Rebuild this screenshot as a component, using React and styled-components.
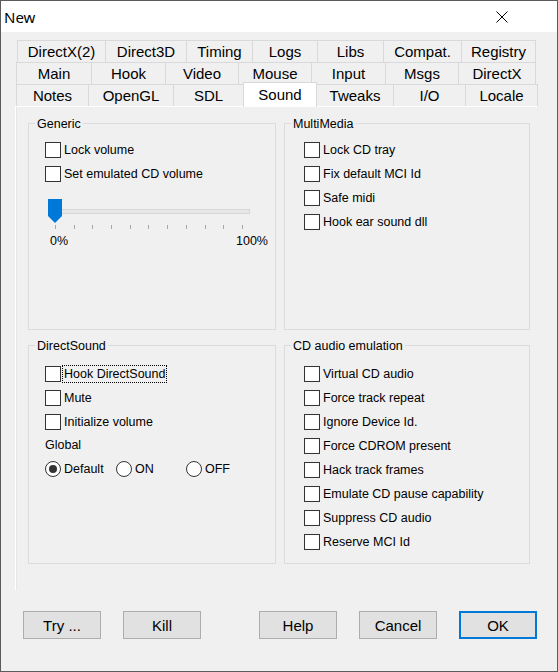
import React from 'react';
import styled, { createGlobalStyle, css } from 'styled-components';

const Global = createGlobalStyle`
  html, body { margin: 0; padding: 0; background: #ffffff; }
  body { font-family: "Liberation Sans", Arial, sans-serif; }
  * { box-sizing: border-box; }
`;

const Window = styled.div`
  width: 558px;
  height: 672px;
  border: 1px solid #5b5b5b;
  background: #f0f0f0;
  display: flex;
  flex-direction: column;
`;

const TitleBar = styled.div`
  height: 31px;
  flex: none;
  background: #ffffff;
  display: flex;
  align-items: center;
  justify-content: space-between;
  padding: 0 49px 0 3px;
  font-family: "Noto Sans", "Liberation Sans", sans-serif;
  font-size: 15px;
  color: #000;
`;

const Body = styled.div`
  flex: 1;
  display: flex;
  flex-direction: column;
  padding: 8px 0 0 14px;
`;

const TabRow = styled.div`
  display: flex;
  height: 22px;
  margin-left: ${p => p.$indent}px;
`;

const Tab = styled.div`
  flex: none;
  width: ${p => p.$w}px;
  height: 22px;
  border-top: 1px solid #d9d9d9;
  border-right: 1px solid #d9d9d9;
  &:first-child { border-left: 1px solid #d9d9d9; }
  display: flex;
  align-items: center;
  justify-content: center;
  font-size: 15px;
  color: #000;
  background: #f0f0f0;
  white-space: nowrap;
  ${p => p.$active && css`
    background: #ffffff;
    height: 25px;
    margin-top: -2px;
    margin-left: -1px;
    border-left: 1px solid #d9d9d9;
    padding-bottom: 2px;
    position: relative;
    z-index: 1;
  `}
`;

const Panel = styled.div`
  width: 522px;
  height: 484px;
  flex: none;
  border-top: 1px solid #ffffff;
  border-left: 1px solid #ffffff;
  box-shadow: inset 1px 0 0 #e6e6e6;
  padding: 8px 0 0 12px;
  display: grid;
  grid-template-columns: 248px 246px;
  grid-template-rows: 215px 227px;
  column-gap: 8px;
  row-gap: 7px;
`;

const Group = styled.fieldset`
  margin: 0;
  min-width: 0;
  border: 1px solid #dcdcdc;
  padding: ${p => p.$pt}px 0 0 ${p => p.$pl}px;
  display: flex;
  flex-direction: column;
`;

const Legend = styled.legend`
  font-size: 12.5px;
  line-height: 16px;
  padding: 1px 2px 0;
  margin-left: ${p => 6 - p.$pl}px;
  color: #000;
`;

const CheckRow = styled.label`
  display: flex;
  align-items: center;
  gap: 3px;
  height: 24px;
  font-size: 12.5px;
  color: #000;
  white-space: nowrap;
`;

const Box = styled.span`
  flex: none;
  width: 16px;
  height: 16px;
  border: 1px solid #333333;
  background: #ffffff;
`;

const LabelText = styled.span`
  line-height: 15px;
  padding-top: 1px;
  padding-right: 1px;
  ${p => p.$focus && css`
    outline: 1px dotted #000;
    outline-offset: 0;
    margin-left: -1px;
    padding-left: 1px;
  `}
`;

const PlainLabel = styled.div`
  height: 21px;
  display: flex;
  align-items: center;
  padding-top: 1px;
  font-size: 12.5px;
  color: #000;
`;

const RadioRow = styled.div`
  display: grid;
  grid-template-columns: 71px 70px auto;
  height: 27px;
  align-items: center;
`;

const Radio = styled.label`
  display: flex;
  align-items: center;
  gap: 3px;
  font-size: 12.5px;
  color: #000;
`;

const RadioCircle = styled.span`
  flex: none;
  width: 16px;
  height: 16px;
  border-radius: 50%;
  border: 1px solid #333333;
  background: #ffffff;
  display: flex;
  align-items: center;
  justify-content: center;
  &::after {
    content: "";
    width: 8px;
    height: 8px;
    border-radius: 50%;
    background: ${p => (p.$on ? '#333333' : 'transparent')};
  }
`;

const Slider = styled.div`
  width: 202px;
  margin: 13px 0 0 3px;
  display: flex;
  flex-direction: column;
`;

const TrackArea = styled.div`
  position: relative;
  height: 24px;
  display: flex;
  align-items: center;
`;

const Track = styled.div`
  width: 100%;
  height: 5px;
  background: #e7e7e7;
  border: 1px solid #d6d6d6;
`;

const Thumb = styled.svg`
  position: absolute;
  left: 0;
  top: 0;
`;

const Ticks = styled.div`
  display: flex;
  justify-content: space-between;
  padding: 0 7px;
  margin-top: 2px;
  height: 4px;
`;

const Tick = styled.span`
  width: 1px;
  height: 4px;
  background: #a8a8a8;
`;

const SliderLabels = styled.div`
  width: 218px;
  margin: 4px 0 0 2px;
  display: flex;
  justify-content: space-between;
  font-size: 12.5px;
  line-height: 16px;
  color: #000;
`;

const Footer = styled.div`
  display: flex;
  justify-content: space-between;
  padding: 0 20px 0 8px;
  margin-top: 21px;
`;

const ButtonGroup = styled.div`
  display: flex;
  gap: 22px;
`;

const Button = styled.button`
  width: 78px;
  height: 28px;
  background: #e1e1e1;
  border: 1px solid #adadad;
  font-family: "Liberation Sans", Arial, sans-serif;
  font-size: 15px;
  color: #000;
  padding: 0;
  display: flex;
  align-items: center;
  justify-content: center;
  ${p => p.$default && css`
    border: 2px solid #0078d7;
  `}
`;

const row1 = [
  ['DirectX(2)', 89], ['Direct3D', 81], ['Timing', 66], ['Logs', 65],
  ['Libs', 66], ['Compat.', 78], ['Registry', 74],
];
const row2 = [
  ['Main', 76], ['Hook', 74], ['Video', 73], ['Mouse', 73],
  ['Input', 74], ['Msgs', 73], ['DirectX', 77],
];
const row3 = [
  ['Notes', 73], ['OpenGL', 85], ['SDL', 70], ['Sound', 74, true],
  ['Tweaks', 77], ['I/O', 72], ['Locale', 72],
];

const Check = ({ label, focus }) => (
  <CheckRow>
    <Box />
    <LabelText $focus={focus}>{label}</LabelText>
  </CheckRow>
);

const CloseIcon = () => (
  <svg width="12" height="12" viewBox="0 0 12 12">
    <path d="M0.5 0.5 L11.5 11.5 M11.5 0.5 L0.5 11.5" stroke="#000" strokeWidth="1" fill="none" />
  </svg>
);

export default function App() {
  return (
    <>
      <Global />
      <Window>
        <TitleBar>
          <span>New</span>
          <CloseIcon />
        </TitleBar>
        <Body>
          <TabRow $indent={2}>
            {row1.map(([t, w]) => <Tab key={t} $w={w}>{t}</Tab>)}
          </TabRow>
          <TabRow $indent={1}>
            {row2.map(([t, w]) => <Tab key={t} $w={w}>{t}</Tab>)}
          </TabRow>
          <TabRow $indent={1}>
            {row3.map(([t, w, a]) => <Tab key={t} $w={w} $active={a}>{t}</Tab>)}
          </TabRow>
          <Panel>
            <Group $pt={6} $pl={16}>
              <Legend $pl={16}>Generic</Legend>
              <Check label="Lock volume" />
              <Check label="Set emulated CD volume" />
              <Slider>
                <TrackArea>
                  <Track />
                  <Thumb width="14" height="24" viewBox="0 0 14 24">
                    <path d="M0 0 H14 V17 L7 24 L0 17 Z" fill="#0078d7" />
                  </Thumb>
                </TrackArea>
                <Ticks>
                  {Array.from({ length: 11 }).map((_, i) => <Tick key={i} />)}
                </Ticks>
                <SliderLabels>
                  <span>0%</span>
                  <span>100%</span>
                </SliderLabels>
              </Slider>
            </Group>
            <Group $pt={6} $pl={19}>
              <Legend $pl={19}>MultiMedia</Legend>
              <Check label="Lock CD tray" />
              <Check label="Fix default MCI Id" />
              <Check label="Safe midi" />
              <Check label="Hook ear sound dll" />
            </Group>
            <Group $pt={8} $pl={16}>
              <Legend $pl={16}>DirectSound</Legend>
              <Check label="Hook DirectSound" focus />
              <Check label="Mute" />
              <Check label="Initialize volume" />
              <PlainLabel>Global</PlainLabel>
              <RadioRow>
                <Radio><RadioCircle $on />Default</Radio>
                <Radio><RadioCircle />ON</Radio>
                <Radio><RadioCircle />OFF</Radio>
              </RadioRow>
            </Group>
            <Group $pt={8} $pl={19}>
              <Legend $pl={19}>CD audio emulation</Legend>
              <Check label="Virtual CD audio" />
              <Check label="Force track repeat" />
              <Check label="Ignore Device Id." />
              <Check label="Force CDROM present" />
              <Check label="Hack track frames" />
              <Check label="Emulate CD pause capability" />
              <Check label="Suppress CD audio" />
              <Check label="Reserve MCI Id" />
            </Group>
          </Panel>
          <Footer>
            <ButtonGroup>
              <Button>Try ...</Button>
              <Button>Kill</Button>
            </ButtonGroup>
            <ButtonGroup>
              <Button>Help</Button>
              <Button>Cancel</Button>
              <Button $default>OK</Button>
            </ButtonGroup>
          </Footer>
        </Body>
      </Window>
    </>
  );
}
